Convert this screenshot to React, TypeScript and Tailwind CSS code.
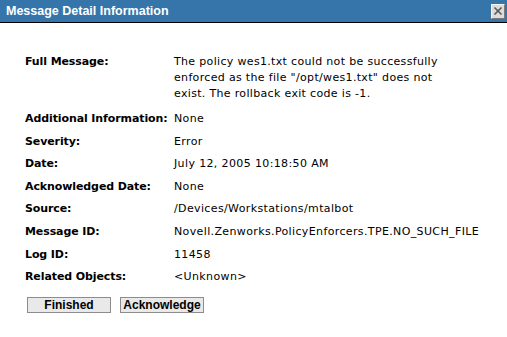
import React from "react";

const rows: { label: string; value: React.ReactNode }[] = [
  { label: "Additional Information:", value: "None" },
  { label: "Severity:", value: "Error" },
  { label: "Date:", value: "July 12, 2005 10:18:50 AM" },
  { label: "Acknowledged Date:", value: "None" },
  { label: "Source:", value: "/Devices/Workstations/mtalbot" },
  { label: "Message ID:", value: "Novell.Zenworks.PolicyEnforcers.TPE.NO_SUCH_FILE" },
  { label: "Log ID:", value: "11458" },
  { label: "Related Objects:", value: "<Unknown>" },
];

export default function App() {
  return (
    <div
      className="w-[507px] h-[337px] bg-white overflow-hidden text-black"
      style={{ fontFamily: '"DejaVu Sans", sans-serif' }}
    >
      <div className="h-[22px] bg-[#3575aa] border-b border-black flex items-center justify-between pl-[6px] pr-[2px] box-content">
        <span className="text-white font-bold text-[12.5px] leading-none font-['Liberation_Sans',sans-serif]">
          Message Detail Information
        </span>
        <div className="w-[14px] h-[15px] bg-[#dcdcdc] border border-t-[#f4f4f4] border-l-[#f4f4f4] border-r-[#7a7a7a] border-b-[#7a7a7a] flex items-center justify-center">
          <svg width="10" height="10" viewBox="0 0 10 10">
            <path d="M1.5 1.5 L8.5 8.5 M8.5 1.5 L1.5 8.5" stroke="#555" strokeWidth="1.6" />
          </svg>
        </div>
      </div>
      <div className="pl-[25px] pt-[31px] text-[11px]">
        <div className="flex">
          <div className="w-[149px] font-bold leading-[16px] tracking-[-0.1px]">Full Message:</div>
          <div className="w-[320px] leading-[16px] tracking-[0.33px]">
            The policy wes1.txt could not be successfully
            <br />
            enforced as the file "/opt/wes1.txt" does not
            <br />
            exist. The rollback exit code is -1.
          </div>
        </div>
        <div className="mt-[6px] flex flex-col">
          {rows.map((r) => (
            <div key={r.label} className="flex h-[22.6px] items-center">
              <div className="w-[149px] font-bold tracking-[-0.1px]">{r.label}</div>
              <div className="tracking-[0.37px]">{r.value}</div>
            </div>
          ))}
        </div>
        <div className="flex gap-[9px] pl-[2px] mt-[8px]">
          <button className="w-[84px] h-[16px] bg-[#e9e9e9] border border-[#8c8c8c] text-[12px] font-bold leading-none flex items-center justify-center font-['Liberation_Sans',sans-serif]">
            Finished
          </button>
          <button className="w-[84px] h-[16px] bg-[#e9e9e9] border border-[#8c8c8c] text-[12px] font-bold leading-none flex items-center justify-center font-['Liberation_Sans',sans-serif]">
            Acknowledge
          </button>
        </div>
      </div>
    </div>
  );
}
